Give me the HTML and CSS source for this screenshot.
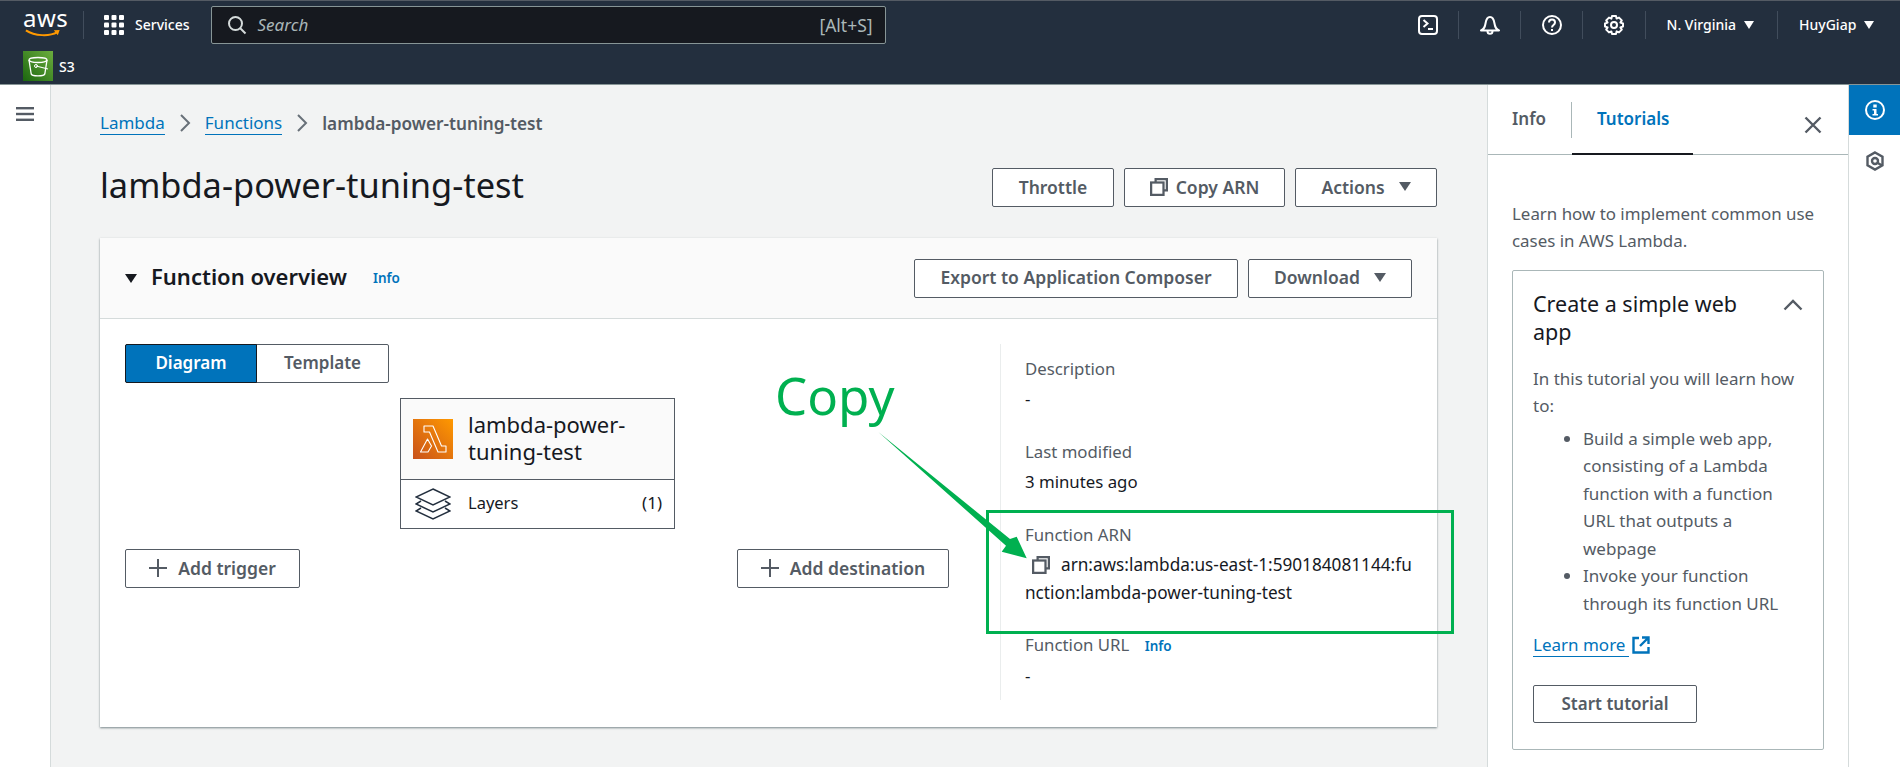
FILE: index.html
```html
<!DOCTYPE html>
<html>
<head>
    <title>lambda-power-tuning-test - Lambda</title>
    <link rel="stylesheet" href="styles.css">
</head>
<body>
    <header class="topnav">
        <div class="nav-row">
            <div class="aws-logo">
                <span class="aws-word">aws</span>
                <svg class="aws-smile" width="40" height="10" viewBox="0 0 40 10"><path d="M1 1.500C11 8 27 8.500 36 3.500" fill="none" stroke="#f90" stroke-width="2.200"/><path d="M32 1.500L38.500 1 36.500 7" fill="#f90"/></svg>
            </div>
            <span class="nav-sep logo-sep"></span>
            <svg class="grid-icon" width="20" height="20" viewBox="0 0 20 20" fill="#fff"><rect x="0" y="0" width="5" height="5" rx="1"/><rect x="7.500" y="0" width="5" height="5" rx="1"/><rect x="15" y="0" width="5" height="5" rx="1"/><rect x="0" y="7.500" width="5" height="5" rx="1"/><rect x="7.500" y="7.500" width="5" height="5" rx="1"/><rect x="15" y="7.500" width="5" height="5" rx="1"/><rect x="0" y="15" width="5" height="5" rx="1"/><rect x="7.500" y="15" width="5" height="5" rx="1"/><rect x="15" y="15" width="5" height="5" rx="1"/></svg>
            <span class="nav-text services">Services</span>
            <div class="search">
                <svg width="20" height="20" viewBox="0 0 20 20" fill="none" stroke="#d5dbdb" stroke-width="2"><circle cx="8.500" cy="8.500" r="6.500"/><path d="M13 13l5.500 5.500"/></svg>
                <span class="search-text">Search</span>
                <span class="search-key">[Alt+S]</span>
            </div>
            <svg class="nav-icon shell-icon" width="20" height="20" viewBox="0 0 20 20" fill="none" stroke="#fff" stroke-width="2"><rect x="1" y="1" width="18" height="18" rx="3"/><path d="M5.500 5L9.500 8.500 5.500 12M10 14h5"/></svg>
            <span class="nav-sep"></span>
            <svg class="nav-icon" width="20" height="20" viewBox="0 0 20 20" fill="none" stroke="#fff" stroke-width="2"><path d="M1 15.500c2.500-1 4-3.500 4.500-7 .5-3.500 2-6.500 4.500-6.500s4 3 4.500 6.500c.5 3.500 2 6 4.500 7z" stroke-linejoin="round"/><path d="M7.500 16c0 3.800 5 3.800 5 0"/></svg>
            <span class="nav-sep"></span>
            <svg class="nav-icon" width="20" height="20" viewBox="0 0 20 20" fill="none" stroke="#fff" stroke-width="2"><circle cx="10" cy="10" r="9"/><path d="M7 7.500c0-4 6-4 6 0 0 2.500-3 2.500-3 5"/><path d="M10 14v2"/></svg>
            <span class="nav-sep"></span>
            <svg class="nav-icon" width="20" height="20" viewBox="0 0 20 20" fill="none" stroke="#fff" stroke-width="2"><circle cx="10" cy="10" r="3"/><path d="M8 1h4l.6 2.600 2.400-1 2.800 2.800-1.400 2.200 2.600.9v3l-2.600.9 1.400 2.200-2.800 2.800-2.400-1L12 19H8l-.6-2.600-2.400 1-2.800-2.800 1.400-2.200L1 11.500v-3l2.600-.9-1.400-2.200L5 2.600l2.400 1z" stroke-linejoin="round"/></svg>
            <span class="nav-sep nav-sep-wide"></span>
            <span class="nav-text region">N. Virginia</span>
            <span class="caret caret-light caret-region"></span>
            <span class="nav-sep nav-sep-wide"></span>
            <span class="nav-text user">HuyGiap</span>
            <span class="caret caret-light"></span>
        </div>
        <div class="fav-row">
            <svg class="s3-icon" width="30" height="30" viewBox="0 0 30 30">
                <defs><linearGradient id="s3bg" x1="0" y1="1" x2="1" y2="0"><stop offset="0" stop-color="#1b660f"/><stop offset="1" stop-color="#6cae3e"/></linearGradient></defs>
                <rect width="30" height="30" fill="url(#s3bg)"/>
                <ellipse cx="15" cy="9" rx="9" ry="2.500" fill="none" stroke="#fff" stroke-width="1.300"/>
                <path d="M6 9l2.200 14c.5 2.500 13 2.500 13.600 0L24 9" fill="none" stroke="#fff" stroke-width="1.300"/>
                <path d="M13 15l12 3" stroke="#fff" stroke-width="1.200"/>
                <circle cx="13" cy="15" r="1.500" fill="none" stroke="#fff"/>
            </svg>
            <span class="nav-text">S3</span>
        </div>
    </header>

    <div class="app">
        <aside class="sidenav">
            <svg width="18" height="14" viewBox="0 0 18 14" fill="#545b64"><rect width="18" height="2.400"/><rect y="5.800" width="18" height="2.400"/><rect y="11.600" width="18" height="2.400"/></svg>
        </aside>

        <main class="content">
            <nav class="crumbs">
                <a class="link">Lambda</a>
                <svg width="12" height="18" viewBox="0 0 12 18" fill="none" stroke="#687078" stroke-width="2"><path d="M2 1l8 8-8 8"/></svg>
                <a class="link">Functions</a>
                <svg width="12" height="18" viewBox="0 0 12 18" fill="none" stroke="#687078" stroke-width="2"><path d="M2 1l8 8-8 8"/></svg>
                <span class="crumb-current">lambda-power-tuning-test</span>
            </nav>

            <div class="page-head">
                <h1>lambda-power-tuning-test</h1>
                <div class="btn-group">
                    <button class="btn btn-throttle">Throttle</button>
                    <button class="btn btn-copy">
                        <svg width="18" height="18" viewBox="1 1 16 16" fill="none" stroke="#545b64" stroke-width="2"><path d="M6 5V2h10v10h-3"/><rect x="2" y="5" width="11" height="11"/></svg>
                        Copy ARN
                    </button>
                    <button class="btn btn-actions">Actions <span class="caret"></span></button>
                </div>
            </div>

            <section class="card">
                <div class="card-head">
                    <span class="caret caret-dark"></span>
                    <h2>Function overview</h2>
                    <a class="info-link">Info</a>
                    <div class="btn-group card-actions">
                        <button class="btn btn-export">Export to Application Composer</button>
                        <button class="btn btn-download">Download <span class="caret"></span></button>
                    </div>
                </div>
                <div class="card-body">
                    <div class="diagram">
                        <div class="segments">
                            <span class="seg seg-on">Diagram</span>
                            <span class="seg">Template</span>
                        </div>
                        <div class="node">
                            <div class="node-top">
                                <svg width="40" height="40" viewBox="0 0 40 40">
                                    <defs><linearGradient id="lambg" x1="0" y1="1" x2="1" y2="0"><stop offset="0" stop-color="#c8511b"/><stop offset="1" stop-color="#f90"/></linearGradient></defs>
                                    <rect width="40" height="40" fill="url(#lambg)"/>
                                    <path d="M11 7h9l8.500 20h4.500v6h-8L16.500 13H11zM14.500 20l4 7-3.500 6H7.500z" fill="none" stroke="#fff" stroke-width="1.100" stroke-linejoin="round"/>
                                </svg>
                                <span class="node-name">lambda-power-<br>tuning-test</span>
                            </div>
                            <div class="node-layers">
                                <svg width="36" height="32" viewBox="0 0 36 32" fill="none" stroke="#232f3e" stroke-width="1.500"><path d="M18 1L35 9 18 17 1 9z"/><path d="M6 13L1 16l17 8 17-8-5-3"/><path d="M6 20l-5 3 17 8 17-8-5-3"/></svg>
                                <span class="layers-name">Layers</span>
                                <span class="layers-count">(1)</span>
                            </div>
                        </div>
                        <div class="diagram-actions">
                            <button class="btn btn-add btn-trigger"><span class="plus"></span>Add trigger</button>
                            <button class="btn btn-add btn-dest"><span class="plus"></span>Add destination</button>
                        </div>
                    </div>
                    <div class="details">
                        <div class="field">
                            <div class="field-label">Description</div>
                            <div class="field-value">-</div>
                        </div>
                        <div class="field">
                            <div class="field-label">Last modified</div>
                            <div class="field-value">3 minutes ago</div>
                        </div>
                        <div class="field field-arn">
                            <div class="field-label">Function ARN</div>
                            <div class="field-value arn-value">
                                <svg class="arn-copy" width="18" height="18" viewBox="1 1 16 16" fill="none" stroke="#545b64" stroke-width="2"><path d="M6 5V2h10v10h-3"/><rect x="2" y="5" width="11" height="11"/></svg>arn:aws:lambda:us-east-1:590184081144:function:lambda-power-tuning-test
                            </div>
                        </div>
                        <div class="field">
                            <div class="field-label">Function URL <a class="info-link">Info</a></div>
                            <div class="field-value">-</div>
                        </div>
                    </div>
                </div>
            </section>
        </main>

        <aside class="panel">
            <div class="panel-tabs">
                <span class="tab tab-first">Info</span>
                <span class="tab-sep"></span>
                <span class="tab tab-on">Tutorials</span>
                <svg class="panel-close" width="18" height="18" viewBox="0 0 18 18" fill="none" stroke="#545b64" stroke-width="2.400"><path d="M1.500 1.500l15 15M16.500 1.500l-15 15"/></svg>
            </div>
            <p class="panel-intro">Learn how to implement common use cases in AWS Lambda.</p>
            <div class="tutorial">
                <div class="tutorial-head">
                    <h3>Create a simple web app</h3>
                    <svg width="20" height="12" viewBox="0 0 20 12" fill="none" stroke="#545b64" stroke-width="2.400"><path d="M1.500 10.500L10 2l8.500 8.500"/></svg>
                </div>
                <p class="tutorial-text">In this tutorial you will learn how to:</p>
                <ul>
                    <li>Build a simple web app, consisting of a Lambda function with a function URL that outputs a webpage</li>
                    <li>Invoke your function through its function URL</li>
                </ul>
                <div class="learn-more">
                    <a class="link">Learn more</a>
                    <svg width="18" height="18" viewBox="0 0 18 18" fill="none" stroke="#0073bb" stroke-width="2.400"><path d="M7 2H1.500v14.500h15V11"/><path d="M10 1.500h6.500V8M16 2L8 10"/></svg>
                </div>
                <button class="btn btn-start">Start tutorial</button>
            </div>
        </aside>

        <div class="rail">
            <div class="rail-on">
                <svg width="20" height="20" viewBox="0 0 20 20"><circle cx="10" cy="10" r="9" fill="none" stroke="#fff" stroke-width="2"/><rect x="8.300" y="4.500" width="3.400" height="3" fill="#fff"/><path d="M7.500 9h4v5H13v1.500H7.500V14H9v-3.500H7.500z" fill="#fff"/></svg>
            </div>
            <div class="rail-off">
                <svg width="18" height="20" viewBox="0 0 18 20" fill="none" stroke="#545b64" stroke-width="2.400"><path d="M9 1.500l7.500 4.300v8.400L9 18.500l-7.500-4.300V5.800z"/><circle cx="9" cy="10" r="3"/><path d="M11 11.500l5 3"/></svg>
            </div>
        </div>

        <div class="callout">
            <span class="callout-text">Copy</span>
            <svg class="callout-arrow" width="150" height="128" viewBox="0 0 150 128"><path d="M0.300 0L132 107 138.700 104.700 148.700 126.300 123.700 119.700 128 113.700z" fill="#00b050"/></svg>
            <div class="callout-box"></div>
        </div>
    </div>
</body>
</html>
```

FILE: styles.css
```css
* {
    box-sizing: border-box;
}

html, body {
    height: 767px;
    margin: 0;
    overflow: hidden;
}

body {
    font-family: "Noto Sans", "Open Sans", sans-serif;
    font-size: 17px;
    color: #16191f;
    background-color: #f2f3f3;
}

h1, h2, h3, p, ul {
    margin: 0;
    font-weight: normal;
}

/* top bar */
.topnav {
    height: 85px;
    background-color: #232f3e;
    border-top: 1px solid #545b64;
    border-bottom: 1px solid #879596;
    color: #fff;
}

.nav-row {
    display: flex;
    align-items: center;
    height: 47px;
    padding-left: 23px;
}

.fav-row {
    display: flex;
    align-items: center;
    gap: 6px;
    height: 36px;
    padding-left: 23px;
}

.aws-logo {
    display: flex;
    flex-direction: column;
    width: 40px;
    height: 30px;
    margin-top: -3px;
}

.aws-word {
    font-size: 24px;
    line-height: 20px;
    letter-spacing: 0.5px;
}

.aws-smile {
    margin-top: 1px;
}

.nav-sep {
    width: 1px;
    height: 28px;
    margin: 0 20.500px;
    background-color: #414d5c;
}

.nav-sep-wide {
    margin: 0 21px;
}

.logo-sep {
    margin: 0 20px 0 20px;
}

.nav-text {
    font-size: 14px;
    font-weight: 500;
}

.services {
    margin-left: 11px;
}

.search {
    display: flex;
    align-items: center;
    width: 675px;
    height: 38px;
    margin-left: 21px;
    margin-right: 532px;
    padding: 0 12px 0 15px;
    background-color: #16191f;
    border: 1px solid #879596;
    border-radius: 2px;
}

.search-text {
    margin-left: 11px;
    font-size: 17px;
    font-style: italic;
    color: #aab7b8;
}

.search-key {
    margin-left: auto;
    font-size: 17.500px;
    color: #aab7b8;
}

.caret {
    display: inline-block;
    border-left: 6px solid transparent;
    border-right: 6px solid transparent;
    border-top: 9px solid #545b64;
}

.caret-light {
    margin-left: 8px;
    border-left-width: 5px;
    border-right-width: 5px;
    border-top: 8px solid #fff;
}

.caret-region {
    margin-right: 2px;
}

/* page frame */
.app {
    position: relative;
    display: flex;
    height: 682px;
}

.sidenav {
    flex: none;
    width: 51px;
    padding: 18px 0 0 16px;
    background-color: #fff;
    border-right: 1px solid #d5dbdb;
}

.content {
    flex: none;
    width: 1436px;
    padding: 0 50px 0 49px;
}

.crumbs {
    display: flex;
    align-items: center;
    gap: 14px;
    height: 24px;
    margin-top: 26px;
}

.link {
    color: #0073bb;
    border-bottom: 1px solid #0073bb;
}

.crumb-current {
    font-weight: 600;
    font-size: 17.200px;
    color: #545b64;
}

.page-head {
    display: flex;
    align-items: center;
    justify-content: space-between;
    height: 39px;
    margin-top: 33px;
}

h1 {
    padding-bottom: 7px;
    font-size: 34.400px;
}

.btn-group {
    display: flex;
    gap: 10px;
}

.btn {
    display: inline-flex;
    align-items: center;
    justify-content: center;
    gap: 8px;
    height: 39px;
    padding: 0 0 2px;
    font-family: inherit;
    font-size: 17.500px;
    font-weight: 600;
    color: #545b64;
    background-color: #fff;
    border: 1px solid #545b64;
    border-radius: 2px;
}

.btn-throttle {
    width: 122px;
}

.btn-copy {
    width: 161px;
}

.btn-actions {
    width: 142px;
    gap: 14px;
}

.btn-export {
    width: 324px;
}

.btn-download {
    width: 164px;
    gap: 14px;
}

/* function overview */
.card {
    height: 489px;
    margin-top: 31px;
    background-color: #fff;
    box-shadow: 0 1px 2px rgba(0, 28, 36, 0.5);
}

.card-head {
    display: flex;
    align-items: center;
    height: 81px;
    padding: 0 25px;
    background-color: #fafafa;
    border-bottom: 1px solid #d5dbdb;
}

.caret-dark {
    border-top-color: #16191f;
}

h2 {
    margin-left: 14px;
    padding-bottom: 4px;
    font-size: 22px;
    font-weight: 600;
}

.info-link {
    font-size: 13.500px;
    font-weight: 600;
    color: #0073bb;
}

.card-head .info-link {
    margin-left: 26px;
}

.field-label .info-link {
    margin-left: 11px;
}

.card-actions {
    margin-left: auto;
}

.card-body {
    display: flex;
    padding: 25px 0 0 25px;
}

.diagram {
    width: 875px;
}

.segments {
    display: flex;
    width: 264px;
    height: 39px;
    border: 1px solid #545b64;
    border-radius: 2px;
}

.seg {
    flex: 1;
    font-weight: 600;
    line-height: 35px;
    text-align: center;
    color: #545b64;
}

.seg-on {
    flex: none;
    width: 132px;
    color: #fff;
    background-color: #0073bb;
    border: 1px solid #16191f;
    margin: -1px 0 -1px -1px;
    border-radius: 2px 0 0 2px;
}

.node {
    width: 275px;
    height: 131px;
    margin: 15px 0 0 275px;
    border: 1px solid #545b64;
}

.node-top {
    display: flex;
    align-items: center;
    gap: 15px;
    height: 81px;
    padding-left: 12px;
    background-color: #fafafa;
    border-bottom: 1px solid #545b64;
}

.node-name {
    padding-bottom: 2px;
    font-size: 22px;
    line-height: 27px;
}

.node-layers {
    display: flex;
    align-items: center;
    height: 48px;
    padding: 0 12px 0 14px;
}

.layers-name {
    margin: -4px 0 0 17px;
    font-size: 16.500px;
}

.layers-count {
    margin: -4px 0 0 auto;
}

.diagram-actions {
    display: flex;
    justify-content: space-between;
    width: 824px;
    margin-top: 20px;
}

.btn-add {
    gap: 11px;
}

.btn-trigger {
    width: 175px;
}

.btn-dest {
    width: 212px;
}

.plus {
    width: 18px;
    height: 18px;
    background:
        linear-gradient(#545b64, #545b64) center / 100% 2px no-repeat,
        linear-gradient(#545b64, #545b64) center / 2px 100% no-repeat;
}

.details {
    width: 437px;
    height: 356px;
    padding: 13px 0 0 24px;
    border-left: 1px solid #eaeded;
    font-size: 16.800px;
}

.field {
    margin-bottom: 29px;
}

.field-label {
    line-height: 24px;
    color: #545b64;
}

.field-value {
    margin-top: 6px;
    line-height: 24px;
}

.field-arn {
    margin-bottom: 26px;
}

.arn-value {
    width: 388px;
    margin-top: 4px;
    font-size: 17.200px;
    line-height: 28px;
    word-break: break-all;
}

.arn-copy {
    margin: 0 11px -3px 7px;
}

/* tools panel */
.panel {
    flex: none;
    width: 362px;
    background-color: #fff;
    border-left: 1px solid #d5dbdb;
    border-right: 1px solid #d5dbdb;
    color: #545b64;
}

.panel-tabs {
    position: relative;
    display: flex;
    height: 70px;
    padding-left: 24px;
    border-bottom: 1px solid #aab7b8;
}

.tab {
    height: 70px;
    padding-top: 22px;
    font-weight: 600;
}

.tab-first {
    width: 59px;
}

.tab-sep {
    width: 1px;
    height: 36px;
    margin-top: 17px;
    background-color: #aab7b8;
}

.tab-on {
    width: 121px;
    padding-left: 25px;
    color: #0073bb;
    border-bottom: 2px solid #16191f;
}

.panel-close {
    position: absolute;
    right: 26px;
    top: 31px;
}

.panel-intro {
    padding: 45px 24px 0;
    font-size: 16.900px;
    line-height: 27px;
}

.tutorial {
    width: 312px;
    height: 480px;
    margin: 16px 0 0 24px;
    padding: 19px 20px 0;
    border: 1px solid #aab7b8;
    border-radius: 2px;
}

.tutorial-head {
    display: flex;
    justify-content: space-between;
    align-items: flex-start;
}

h3 {
    width: 230px;
    font-size: 21.500px;
    line-height: 28px;
    color: #16191f;
}

.tutorial-head svg {
    margin-top: 9px;
}

.tutorial-text {
    margin-top: 19px;
    line-height: 27px;
}

ul {
    margin-top: 5.500px;
    padding-left: 50px;
    line-height: 27.500px;
}

.learn-more {
    display: flex;
    align-items: center;
    gap: 3px;
    margin-top: 16px;
}

.learn-more .link {
    padding-right: 4px;
}

.btn-start {
    width: 164px;
    height: 38px;
    margin-top: 28px;
    font-size: 17px;
}

.rail {
    flex: 1;
    background-color: #fff;
}

.rail-on {
    display: flex;
    align-items: center;
    justify-content: center;
    height: 50px;
    background-color: #0073bb;
}

.rail-off {
    display: flex;
    justify-content: center;
    padding-top: 16px;
}

/* green annotation drawn over the screenshot */
.callout {
    position: absolute;
    left: 0;
    top: 0;
}

.callout-text {
    position: absolute;
    left: 775px;
    top: 270px;
    font-size: 51px;
    line-height: 80px;
    color: #00b050;
}

.callout-arrow {
    position: absolute;
    left: 878px;
    top: 347px;
}

.callout-box {
    position: absolute;
    left: 986px;
    top: 425px;
    width: 468px;
    height: 124px;
    border: 3px solid #00b050;
}
```
